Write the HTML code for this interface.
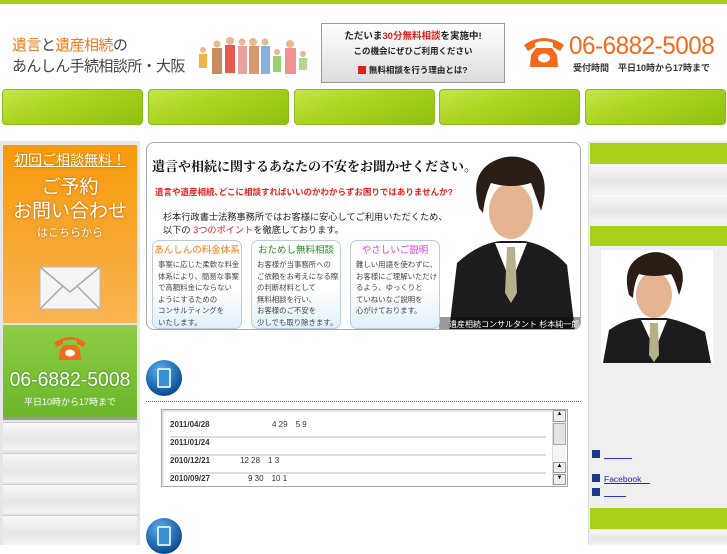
<!DOCTYPE html>
<html><head><meta charset="utf-8"><style>
*{margin:0;padding:0;box-sizing:border-box}
body{width:727px;height:545px;overflow:hidden;background:#fff;font-family:"Liberation Sans","Noto Sans CJK JP",sans-serif;position:relative}
.a{position:absolute}
.nav{position:absolute;top:89px;height:36px;width:141px;border-radius:4px;border:1px solid #8cb820;background:linear-gradient(160deg,#c4e64a 0%,#a9d31c 45%,#8fc010 100%)}
.gray{position:absolute;background:linear-gradient(#f7f7f7,#e6e6e6 60%,#f4f4f4);border-top:1px solid #ccc}
.sub{position:absolute;top:240px;width:90px;height:89px;border:1px solid #bcd;border-radius:7px;background:linear-gradient(#fff 55%,#dff0fb);font-size:7.4px;line-height:11.6px;color:#444;padding:3px 0 0 5px;overflow:hidden;white-space:nowrap}
.sub b{display:block;text-align:center;font-size:9.5px;font-weight:normal;margin:0 0 2px -5px;line-height:13px;white-space:nowrap}
.row{position:absolute;left:170px;font-size:8px;color:#333;width:376px;border-bottom:2px solid #ddd;height:27px;line-height:27px}
.row b{display:inline-block;width:70px}
</style></head><body>
<div class="a" style="left:0;top:0;width:727px;height:4px;background:#a8d018"></div>
<div class="a" style="left:12px;top:35px;font-size:15px;color:#444;letter-spacing:-0.6px;line-height:21px;white-space:nowrap"><span style="color:#f07a1a">遺言</span>と<span style="color:#f07a1a">遺産相続</span>の<br>あんしん手続相談所・大阪</div>
<svg class="a" style="left:195px;top:30px" width="120" height="46">
<g fill="#e8b890"><circle cx="8" cy="20" r="3"/><circle cx="22" cy="14" r="3.5"/><circle cx="35" cy="11" r="4"/><circle cx="47" cy="12" r="3.5"/><circle cx="58" cy="12" r="4"/><circle cx="70" cy="12" r="3.5"/><circle cx="82" cy="22" r="3"/><circle cx="95" cy="14" r="4"/><circle cx="108" cy="24" r="3"/></g>
<rect x="4" y="24" width="8" height="14" fill="#f4b040"/><rect x="17" y="18" width="10" height="26" fill="#c98a60"/><rect x="30" y="15" width="10" height="28" fill="#e85a50"/><rect x="43" y="16" width="9" height="28" fill="#e8a0a0"/><rect x="54" y="16" width="10" height="28" fill="#d89a70"/><rect x="66" y="16" width="9" height="28" fill="#8ab0e0"/><rect x="78" y="26" width="8" height="16" fill="#9bd070"/><rect x="90" y="18" width="11" height="26" fill="#f09090"/><rect x="104" y="28" width="8" height="12" fill="#b0d890"/>
</svg>
<div class="a" style="left:321px;top:23px;width:184px;height:60px;border:1px solid #999;background:linear-gradient(#fff,#ddd);text-align:center;font-size:9.5px;font-weight:bold;color:#222;line-height:15px;padding-top:5px">ただいま<span style="color:#e02020">30分無料相談</span>を実施中!<br><span style="font-size:8.5px">この機会にぜひご利用ください</span><br><span style="font-size:8.5px;line-height:22px"><span style="display:inline-block;width:8px;height:8px;background:#e02020;vertical-align:-1px"></span> 無料相談を行う理由とは?</span></div>
<svg class="a" style="left:522px;top:33px" width="44" height="36"><path d="M2 12 Q22 -2 42 12 L38 18 L31 14 L31 10 Q22 6 13 10 L13 14 L6 18Z" fill="#f26a1b"/><path d="M9 22 L14 15 L30 15 L35 22 L36 34 L8 34Z" fill="#f26a1b"/><ellipse cx="22" cy="25" rx="6" ry="4.5" fill="#fff"/></svg>
<div class="a" style="left:569px;top:32px;font-size:25px;color:#f26a1b;letter-spacing:-0.5px;transform:scaleX(.97);transform-origin:left;white-space:nowrap">06-6882-5008</div>
<div class="a" style="left:573px;top:61px;font-size:9px;font-weight:bold;color:#333;white-space:nowrap">受付時間　平日10時から17時まで</div>
<div class="nav" style="left:2px"></div><div class="nav" style="left:148px"></div><div class="nav" style="left:294px"></div><div class="nav" style="left:439px"></div><div class="nav" style="left:585px"></div>
<div class="a" style="left:0;top:141px;width:140px;height:404px;background:#e6e6e6"></div>
<div class="a" style="left:3px;top:145px;width:134px;height:178px;background:linear-gradient(#f79a0a,#f8a936 60%,#f9b552);text-align:center;color:#fff">
<div style="font-size:14px;margin-top:5px;text-decoration:underline;text-decoration-color:#ffd;text-shadow:0 0 2px #b60">初回ご相談無料！</div>
<div style="font-size:19px;line-height:24px;margin-top:6px;text-shadow:0 0 2px #a50">ご予約<br>お問い合わせ</div>
<div style="font-size:11px;text-shadow:0 0 2px #a50">はこちらから</div>
<svg style="margin-top:26px" width="62" height="44"><rect x="1" y="1" width="60" height="42" fill="#f4f4f4" stroke="#bbb"/><path d="M1 1 L31 26 L61 1 M1 43 L24 20 M61 43 L38 20" stroke="#aaa" fill="none" stroke-width="1.5"/></svg>
</div>
<div class="a" style="left:3px;top:325px;width:134px;height:95px;background:linear-gradient(#8fcc4a,#7cc235 50%,#6bb62c);border-bottom:3px solid #999;text-align:center;color:#fff">
<svg style="margin-top:8px" width="34" height="28"><path d="M1 10 Q17 -2 33 10 L30 14 L24 11 L24 8 Q17 5 10 8 L10 11 L4 14Z" fill="#f26a1b"/><path d="M7 17 L11 12 L23 12 L27 17 L28 27 L6 27Z" fill="#f26a1b"/><ellipse cx="17" cy="20" rx="5" ry="3.5" fill="#fff"/></svg>
<div style="font-size:20px;margin-top:3px;transform:scaleX(.97);text-shadow:0 0 2px #363;white-space:nowrap">06-6882-5008</div>
<div style="font-size:9px;margin-top:3px">平日10時から17時まで</div></div>
<div class="gray" style="left:3px;top:422px;width:134px;height:28px"></div>
<div class="gray" style="left:3px;top:453px;width:134px;height:29px"></div>
<div class="gray" style="left:3px;top:484px;width:134px;height:29px"></div>
<div class="gray" style="left:3px;top:515px;width:134px;height:30px"></div>
<div class="a" style="left:146px;top:142px;width:435px;height:188px;border:1px solid #aaa;border-radius:8px;background:#fff;overflow:hidden">
<svg class="a" style="left:292px;top:10px" width="142" height="178"><rect x="0" y="0" width="142" height="178" fill="#fff"/><path d="M10 178 L18 110 Q40 90 62 88 L85 88 Q110 92 128 112 L136 178Z" fill="#1c1c1e"/><path d="M56 90 L72 130 L88 90Z" fill="#fff"/><path d="M68 94 L76 94 L78 140 L72 150 L66 140Z" fill="#b8b08a"/><ellipse cx="72" cy="58" rx="22" ry="28" fill="#e5b592"/><path d="M40 55 Q30 20 55 8 Q75 -2 95 10 Q112 25 102 58 Q96 40 92 30 Q72 36 52 30 Q46 42 44 60Z" fill="#2a1d16"/><rect x="0" y="164" width="142" height="14" fill="rgba(0,0,0,.4)"/><text x="10" y="174" font-size="8" fill="#fff">遺産相続コンサルタント 杉本純一郎</text></svg>
</div>
<div class="a" style="left:152px;top:156px;font-size:13px;font-weight:bold;font-family:'Liberation Serif','Noto Serif CJK JP',serif;color:#111;white-space:nowrap">遺言や相続に関するあなたの不安をお聞かせください。</div>
<div class="a" style="left:155px;top:186px;font-size:8.5px;font-weight:bold;color:#e82020;white-space:nowrap">遺言や遺産相続､どこに相談すればいいのかわからずお困りではありませんか?</div>
<div class="a" style="left:163px;top:211px;font-size:9.2px;color:#222;line-height:13px;white-space:nowrap">杉本行政書士法務事務所ではお客様に安心してご利用いただくため、<br>以下の <span style="color:#e82020">3つのポイント</span>を徹底しております。</div>
<div class="sub" style="left:152px"><b style="color:#f07a1a">あんしんの料金体系</b>事案に応じた柔軟な料金<br>体系により、簡易な事案<br>で高額料金にならない<br>ようにするための<br>コンサルティングを<br>いたします。</div>
<div class="sub" style="left:251px"><b style="color:#2a8a2a">おためし無料相談</b>お客様が当事務所への<br>ご依頼をお考えになる際<br>の判断材料として<br>無料相談を行い、<br>お客様のご不安を<br>少しでも取り除きます。</div>
<div class="sub" style="left:350px"><b style="color:#e040e0">やさしいご説明</b>難しい用語を使わずに、<br>お客様にご理解いただけ<br>るよう、ゆっくりと<br>ていねいなご説明を<br>心がけております。</div>
<div class="a" style="left:146px;top:360px;width:36px;height:36px;border-radius:50%;background:radial-gradient(circle at 40% 30%,#5ab0f0,#0a4a90 75%)"><div style="margin:8px 0 0 11px;width:14px;height:20px;border:2px solid #cfe8ff;border-radius:2px;background:#3a90d0"></div></div>
<div class="a" style="left:146px;top:518px;width:36px;height:36px;border-radius:50%;background:radial-gradient(circle at 40% 30%,#5ab0f0,#0a4a90 75%)"><div style="margin:8px 0 0 11px;width:14px;height:20px;border:2px solid #cfe8ff;border-radius:2px;background:#3a90d0"></div></div>
<div class="a" style="left:146px;top:401px;width:435px;border-top:1px dotted #666"></div>
<div class="a" style="left:161px;top:409px;width:407px;height:78px;border:1px solid #aaa;box-shadow:inset 1px 1px 2px #ccc"></div>
<div class="row" style="top:411px"><b>2011/04/28</b>　　　　4 29　5 9</div>
<div class="row" style="top:429px"><b>2011/01/24</b></div>
<div class="row" style="top:447px"><b>2010/12/21</b>12 28　1 3</div>
<div class="row" style="top:465px;border:0"><b>2010/09/27</b>　9 30　10 1</div>
<div class="a" style="left:552px;top:410px;width:14px;height:76px;background:#f4f4f4;border-left:1px solid #ddd"><div style="height:12px;border:1px solid #999;background:#eee;font-size:6px;text-align:center">▲</div><div style="height:22px;border:1px solid #aaa;background:#e4e4e4;margin-top:1px"></div><div style="position:absolute;top:52px;width:13px;height:11px;border:1px solid #999;background:#eee;font-size:6px;text-align:center">▲</div><div style="position:absolute;top:64px;width:13px;height:11px;border:1px solid #999;background:#eee;font-size:6px;text-align:center">▼</div></div>
<div class="a" style="left:588px;top:141px;width:139px;height:404px;background:#efefef;border-left:1px solid #ddd"></div>
<div class="a" style="left:590px;top:143px;width:137px;height:21px;background:#a8d018"></div>
<div class="gray" style="left:590px;top:165px;width:137px;height:28px;border:0"></div>
<div class="gray" style="left:590px;top:195px;width:137px;height:28px;border:0"></div>
<div class="a" style="left:590px;top:226px;width:137px;height:20px;background:#a8d018"></div>
<svg class="a" style="left:601px;top:250px" width="112" height="113"><rect width="112" height="113" fill="#fff"/><path d="M2 113 L8 80 Q25 68 42 68 L66 68 Q85 72 104 82 L110 113Z" fill="#1c1c1e"/><path d="M40 70 L54 100 L66 70Z" fill="#fff"/><path d="M49 73 L57 73 L58 105 L53 112 L48 105Z" fill="#b8b08a"/><ellipse cx="53" cy="45" rx="18" ry="23" fill="#e5b592"/><path d="M28 45 Q20 15 42 5 Q58 -2 72 8 Q88 20 78 45 Q74 30 70 24 Q53 28 38 24 Q33 32 32 48Z" fill="#2a1d16"/></svg>
<div class="a" style="left:592px;top:450px;width:8px;height:8px;background:#1a3a8a"></div>
<div class="a" style="left:604px;top:450px;width:28px;border-bottom:1px solid #33c;height:9px"></div>
<div class="a" style="left:592px;top:474px;width:8px;height:8px;background:#1a3a8a"></div>
<div class="a" style="left:604px;top:473px;font-size:8.5px;color:#22c;text-decoration:underline">Facebook　</div>
<div class="a" style="left:592px;top:488px;width:8px;height:8px;background:#1a3a8a"></div>
<div class="a" style="left:604px;top:488px;width:22px;border-bottom:1px solid #33c;height:9px"></div>
<div class="a" style="left:590px;top:508px;width:137px;height:21px;background:#a8d018"></div>
<div class="gray" style="left:590px;top:530px;width:137px;height:15px;border:0"></div>
</body></html>
